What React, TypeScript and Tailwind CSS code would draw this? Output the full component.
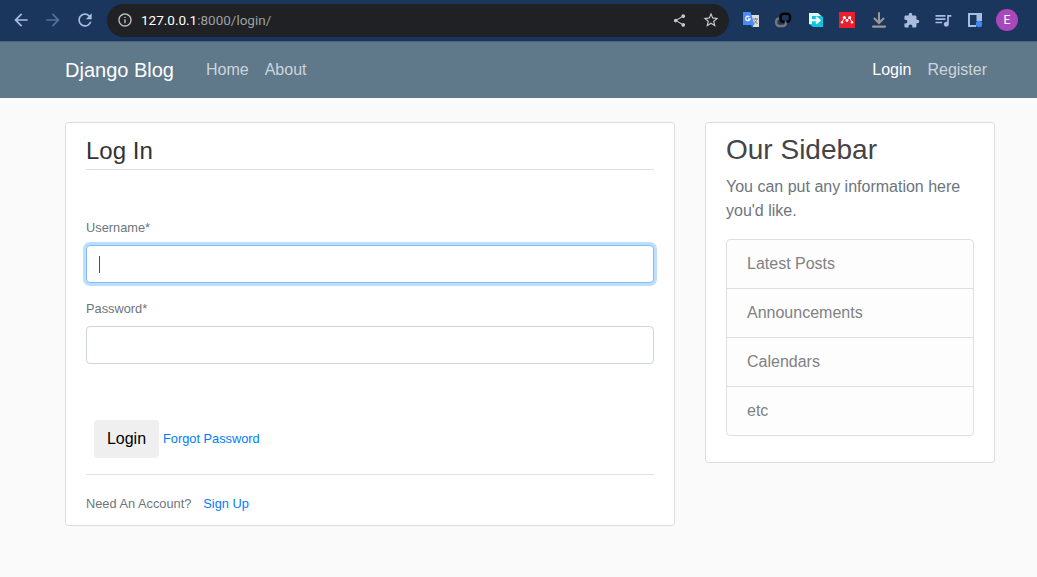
import type { ReactNode } from 'react';
import {
  MdArrowBack,
  MdArrowForward,
  MdExtension,
  MdInfoOutline,
  MdQueueMusic,
  MdRefresh,
  MdShare,
  MdStarBorder,
} from 'react-icons/md';

function TranslateIcon() {
  return (
    <svg width="18" height="18" viewBox="0 0 18 18">
      <path d="M7 4h10v12h-7z" fill="#dcdcdc" />
      <path d="M8 13l3 4v-4z" fill="#2f5fc4" />
      <path d="M1 1h7.500l4 13H1z" fill="#4c8bf5" />
      <path d="M7.500 6A2.200 2.200 0 1 0 8 8H6" fill="none" stroke="#eef4ff" strokeWidth="1.300" />
      <path d="M11 8h5M13.500 7v1M15 8c-.5 2-1.500 3.500-3 4.500M12.500 9.500l3 3.500" fill="none" stroke="#6d7f96" strokeWidth="1" />
    </svg>
  );
}

function LinkIcon() {
  return (
    <svg width="18" height="18" viewBox="0 0 18 18" fill="none" strokeWidth="2.400">
      <path d="M5.500 7.400H5.200a3 3 0 0 0-3 3v1.600a3 3 0 0 0 3 3H9a3 3 0 0 0 3-3v-1.500" stroke="#77777a" />
      <path d="M12.500 10.800h.5a3 3 0 0 0 3-3V5.700a3 3 0 0 0-3-3H9.500a3 3 0 0 0-3 3v2.100a3 3 0 0 0 3 3h1" stroke="#050505" />
    </svg>
  );
}

function ShareDocIcon() {
  return (
    <svg width="16" height="16" viewBox="0 0 16 16">
      <path d="M1 1h9l5 4v10H5l-4-3z" fill="#12c5dc" />
      <path d="M1 1h9l3 3H4v8H1z" fill="#dcfaff" />
      <path d="M2.500 8.300h9M8 5l3.500 3.300L8 11.600" fill="none" stroke="#fff" strokeWidth="2" />
    </svg>
  );
}

function MendeleyIcon() {
  return (
    <svg width="16" height="16" viewBox="0 0 16 16">
      <path d="M0 0h16v16H0z" fill="#e8202e" />
      <g fill="#fff">
        <circle cx="5.300" cy="5.500" r="1.500" />
        <circle cx="10.700" cy="5.500" r="1.500" />
        <circle cx="8" cy="8.600" r="1.400" />
        <circle cx="3" cy="10.200" r="1.200" />
        <circle cx="13" cy="10.200" r="1.200" />
      </g>
      <path d="M3.300 9.800l2-4L8 8l2.700-2.200 2 4" fill="none" stroke="#fff" strokeWidth=".9" />
    </svg>
  );
}

function DownloadIcon() {
  return (
    <svg width="16" height="16" viewBox="0 0 16 16" fill="none" stroke="#9b9b96" strokeWidth="2" strokeLinecap="round">
      <path d="M8 1v9.500M3.500 6.500L8 11l4.500-4.500" />
      <path d="M2 14.600h12" strokeWidth="2.200" />
    </svg>
  );
}

function SidePanelIcon() {
  return (
    <svg width="16" height="16" viewBox="0 0 16 16">
      <path d="M1 1h14v14H1z" fill="#a9bcdf" />
      <path d="M3 3h6.500v10H3zM9 9h6v6H9z" fill="#1b365d" />
      <circle cx="12" cy="12" r="3.200" fill="#4285f4" />
    </svg>
  );
}

function BrowserBar() {
  return (
    <header className="flex h-[41px] items-center bg-[#1b365d] font-[Roboto,sans-serif] text-[#a9bcdf]">
      <div className="flex w-[107px] shrink-0 items-center pb-px pl-[11px]">
        <MdArrowBack size={20} className="mr-3" />
        <MdArrowForward size={20} className="mr-3 text-[#56709a]" />
        <MdRefresh size={20} />
      </div>
      <div className="mb-px flex h-[33px] w-[622px] shrink-0 items-center rounded-full bg-[#202124] pr-[9px] pl-[10px]">
        <MdInfoOutline size={16} className="text-[#bdc1c6]" />
        <span className="ml-2 text-[13.5px] text-[#9aa0a6]">
          <span className="text-white">127.0.0.1</span>:8000/login/
        </span>
        <MdShare size={15} className="ml-auto text-[#c4c7cb]" />
        <MdStarBorder size={18} className="ml-[15px] text-[#c4c7cb]" />
      </div>
      <div className="mb-px flex flex-1 items-center pl-[6px]">
        <ToolSlot><TranslateIcon /></ToolSlot>
        <ToolSlot><LinkIcon /></ToolSlot>
        <ToolSlot><span className="pl-[2px]"><ShareDocIcon /></span></ToolSlot>
        <ToolSlot><MendeleyIcon /></ToolSlot>
        <ToolSlot><DownloadIcon /></ToolSlot>
        <ToolSlot><MdExtension size={17} /></ToolSlot>
        <ToolSlot><MdQueueMusic size={20} /></ToolSlot>
        <ToolSlot><SidePanelIcon /></ToolSlot>
        <ToolSlot>
          <span className="flex size-[22px] items-center justify-center rounded-full bg-[#ab47bc] text-[12px] text-white">E</span>
        </ToolSlot>
      </div>
    </header>
  );
}

function ToolSlot({ children }: { children: ReactNode }) {
  return <span className="flex h-6 w-8 shrink-0 items-center justify-center">{children}</span>;
}

function NavBar() {
  return (
    <nav className="flex h-[57px] items-center border-t border-[#4a6380] bg-[#5f788a] pr-[50px] pl-[65px] text-[16px] text-[#cbd5db]">
      <a className="mr-8 text-[20px] text-white">Django Blog</a>
      <a className="mr-4">Home</a>
      <a>About</a>
      <a className="ml-auto text-white">Login</a>
      <a className="ml-4">Register</a>
    </nav>
  );
}

function LoginCard() {
  return (
    <main className="h-[404px] w-[610px] shrink-0 rounded-[3px] border border-[#dddddd] bg-white px-5 pt-[10px] text-[12.8px] leading-5 text-[#6c757d]">
      <h1 className="h-[37px] border-b border-[#dee2e6] text-[24px] leading-[36px] text-[#333333]">Log In</h1>
      <label className="mt-12 block">Username*</label>
      <div className="mt-[7px] flex h-[38px] items-center rounded border border-[#80bdff] bg-white pl-3 shadow-[0_0_0_3px_#bfdeff]">
        <span className="h-[17px] w-px bg-[#495057]" />
      </div>
      <label className="mt-4 block">Password*</label>
      <div className="mt-[7px] h-[38px] rounded border border-[#ced4da] bg-white" />
      <div className="mt-14 flex items-center pl-2">
        <button className="h-[38px] w-[65px] rounded bg-[#efefef] text-[16px] text-black">Login</button>
        <a className="ml-1 text-[#007bff]">Forgot Password</a>
      </div>
      <div className="mt-4 border-t border-[#dee2e6] pt-[19px]">
        Need An Account?
        <a className="ml-3 text-[#007bff]">Sign Up</a>
      </div>
    </main>
  );
}

const sidebarItems = ['Latest Posts', 'Announcements', 'Calendars', 'etc'];

function Sidebar() {
  return (
    <aside className="h-[341px] w-[290px] shrink-0 rounded-[3px] border border-[#dddddd] bg-white px-5 pt-[10px] text-[16px]">
      <h2 className="text-[28px] leading-[34px] text-[#444444]">Our Sidebar</h2>
      <p className="mt-2 mb-4 leading-6 text-[#6c757d]">You can put any information here you'd like.</p>
      <ul className="divide-y divide-[#dfdfdf] rounded border border-[#dfdfdf] bg-[#fdfdfe] text-[#818182]">
        {sidebarItems.map((item) => (
          <li key={item} className="h-[49px] px-5 py-3 leading-6 last:h-12">{item}</li>
        ))}
      </ul>
    </aside>
  );
}

export default function App() {
  return (
    <div className="h-[577px] w-[1037px] overflow-hidden bg-[#fafafa] font-['Liberation_Sans',Arial,sans-serif]">
      <BrowserBar />
      <NavBar />
      <div className="mt-6 flex items-start gap-[30px] pl-[65px]">
        <LoginCard />
        <Sidebar />
      </div>
    </div>
  );
}
